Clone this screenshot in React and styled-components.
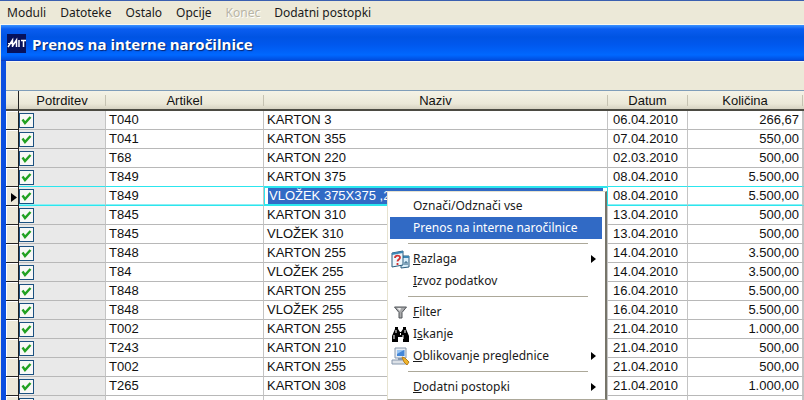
import React from 'react';
import styled, { createGlobalStyle, css } from 'styled-components';

const GlobalStyle = createGlobalStyle`
  * {
    box-sizing: border-box;
  }

  body {
    margin: 0;
    background: #ece9d8;
  }
`;

const uiFont = css`
  font-family: 'Noto Sans', Tahoma, sans-serif;
  font-size: 12px;
`;

const gridFont = css`
  font-family: 'Liberation Sans', Arial, sans-serif;
  font-size: 13px;
`;

const Page = styled.div`
  display: flex;
  flex-direction: column;
  height: 100vh;
  overflow: hidden;
  background: #ece9d8;
  ${uiFont}
`;

const MenuBar = styled.nav`
  display: flex;
  flex: none;
  gap: 14px;
  padding: 0 7px;
  border-top: 1px solid #3a5fb0;
  border-bottom: 1px solid #f8f7f0;
`;

const MenuBarButton = styled.button`
  padding: 0;
  border: 0;
  background: none;
  color: #1a1a1a;
  font: inherit;
  line-height: 23px;

  &:disabled {
    color: #b8b5a6;
    text-shadow: 1px 1px 0 #ffffff;
  }
`;

const Window = styled.section`
  display: flex;
  flex: 1;
  flex-direction: column;
  min-height: 0;
  margin-left: 1px;
`;

const TitleBar = styled.header`
  display: flex;
  flex: none;
  align-items: center;
  gap: 6px;
  height: 36px;
  padding: 2px 6px 0;
  border-bottom: 1px solid #0a3fc4;
  background: linear-gradient(#3a93ff 0, #0a5df0 4px, #0054e3 12px, #0058ee 20px, #0068ff 30px, #0048d8 36px);
`;

const Title = styled.h1`
  margin: 0;
  color: #ffffff;
  font-family: 'Open Sans', sans-serif;
  font-size: 15px;
  font-weight: 700;
  text-shadow: 1px 1px 1px #0a246a;
`;

const WindowBody = styled.div`
  flex: 1;
  min-height: 0;
  border-left: 5px solid #0b4fe0;
`;

const Toolbar = styled.div`
  height: 29px;
  border-top: 1px solid #f8f7f0;
`;

const GridArea = styled.div`
  position: relative;
  border-top: 1px solid #7f9db9;
`;

const Table = styled.table`
  width: 100%;
  border-collapse: separate;
  border-spacing: 0;
  table-layout: fixed;
  ${gridFont}
`;

const Col = styled.col`
  width: ${({ $width }) => ($width ? `${$width}px` : 'auto')};
`;

const Th = styled.th`
  height: 20px;
  padding: 1px 0 0;
  border-bottom: 2px solid #4b4a42;
  background: linear-gradient(#f4f2e6, #ebe8d8 70%, #d6d2c2);
  color: #111111;
  font-weight: 400;
  line-height: 17px;
  text-align: center;
`;

const HeaderLabel = styled.div`
  height: 11px;
  border-right: 1px solid #c5c2b2;
  line-height: 11px;
`;

const CornerTh = styled(Th)`
  border-right: 1px solid #222222;
`;

const Td = styled.td`
  height: 19px;
  padding: 0 3px;
  overflow: hidden;
  border-right: 1px solid #c4c4c4;
  border-bottom: 1px solid ${({ $outlined }) => ($outlined ? '#2ce6ee' : '#b8b8b8')};
  background: #ffffff;
  box-shadow: ${({ $active }) => ($active ? 'inset 0 -1px 0 #8ceff4' : 'none')};
  color: #111111;
  line-height: 18px;
  text-align: ${({ $align }) => $align || 'left'};
  white-space: nowrap;
`;

const MarkerCell = styled(Td)`
  padding: 0 0 0 5px;
  border-right-color: #222222;
  border-bottom-color: #222222;
  background: #ece9d8;
  box-shadow: inset 1px 1px 0 #ffffff;
`;

const CheckCell = styled(Td)`
  padding: 0;
  background: #e9e9e9;
`;

const DateCell = styled(Td)`
  padding: 0 5px;
`;

const EditCell = styled(Td)`
  padding: 1px 4px 1px 3px;
  border: 1px solid #2ce6ee;
  border-top: 0;
  box-shadow: inset 0 1px 0 #2ce6ee, inset 0 -1px 0 #2ce6ee;
`;

const CellInput = styled.input`
  display: block;
  width: 100%;
  height: 16px;
  padding: 0 1px;
  border: 0;
  outline: 0;
  background: #316ac5;
  color: #ffffff;
  font: inherit;
  line-height: 16px;
`;

const CheckLabel = styled.label`
  display: grid;
  width: 15px;
  height: 16px;
  align-items: center;
  justify-items: center;

  > * {
    grid-area: 1 / 1;
  }
`;

const CheckInput = styled.input`
  width: 15px;
  height: 15px;
  margin: 0;
  appearance: none;
  border: 1px solid #1c5180;
  background: #f8f8f6;

  &:not(:checked) + svg {
    visibility: hidden;
  }
`;

const Popup = styled.div`
  position: absolute;
  top: 100px;
  left: 381px;
  width: 220px;
  padding: 3px 3px 1px 2px;
  border: 1px solid #e6e2d0;
  border-right: 2px solid #77756a;
  border-bottom-color: #aca899;
  background: #ffffff;
`;

const PopupItem = styled.button`
  display: grid;
  grid-template-columns: 20px 1fr 8px;
  gap: 3px;
  align-items: center;
  width: 100%;
  height: 22px;
  padding: 0 3px 0 0;
  border: 0;
  background: ${({ $active }) => ($active ? '#316ac5' : 'transparent')};
  color: ${({ $active }) => ($active ? '#ffffff' : '#1a1a1a')};
  ${uiFont}
  line-height: 16px;
  text-align: left;
`;

const IconSlot = styled.span`
  display: flex;
  justify-content: center;
`;

const Separator = styled.hr`
  height: 1px;
  margin: 4px 14px 4px 18px;
  border: 0;
  background: #aca899;
`;

const MitLogo = () => (
  <svg width="19" height="19" viewBox="0 0 19 19" aria-hidden="true">
    <rect width="19" height="19" fill="#07125c" />
    <path
      d="M1 13 5.5 6v7M5.5 12 9.5 6v7M12 6v7M14 6.5h5M16.5 6.5V13"
      fill="none"
      stroke="#ffffff"
      strokeWidth="1.5"
    />
    <path d="M1 9.5h5" stroke="#ffffff" />
  </svg>
);

const CheckMark = () => (
  <svg width="11" height="11" viewBox="0 0 11 11" aria-hidden="true">
    <path d="M1.5 4.5 4 8 9.5 2" fill="none" stroke="#21a121" strokeWidth="2.4" />
  </svg>
);

const RowPointer = () => (
  <svg width="6" height="12" viewBox="0 0 6 12" display="block" aria-hidden="true">
    <path d="M0 3v9l6-4.5z" fill="#000000" />
  </svg>
);

const SubmenuArrow = () => (
  <svg width="5" height="8" viewBox="0 0 5 8" aria-hidden="true">
    <path d="M0 0v8l5-4z" fill="#000000" />
  </svg>
);

const HelpIcon = () => (
  <svg width="19" height="19" viewBox="0 0 19 19" aria-hidden="true">
    <path d="M10 6h8v11l-8 1z" fill="#d9eefa" stroke="#285b7c" />
    <path d="M10 6h8v2h-8z" fill="#3c86b4" />
    <path d="m1 3 11-2v14L1 17z" fill="#eef7fc" stroke="#285b7c" />
    <path d="m1 3 11-2v2L1 5z" fill="#3c86b4" />
    <path
      d="M4 8c0-3 5-3 5-.5 0 2-2.5 2-2.5 4M6.5 13v2"
      fill="none"
      stroke="#d23432"
      strokeWidth="1.8"
    />
    <path d="M14 15v-3h2v3" fill="none" stroke="#285b7c" />
  </svg>
);

const FilterIcon = () => (
  <svg width="13" height="13" viewBox="0 0 13 13" aria-hidden="true">
    <path d="M.5 1h12L8 6.5V12H5V6.5z" fill="#a9aaac" stroke="#505458" />
    <path d="M3 2h4L6 5z" fill="#eeeeee" />
  </svg>
);

const BinocularsIcon = () => (
  <svg width="19" height="16" viewBox="0 0 19 16" aria-hidden="true">
    <path d="M4 1h3v2l2 3h1l2-3V1h3v2l3 7v6h-6v-5H7v5H1v-6l3-7z" fill="#000000" />
    <path d="M5 4v3M3 9v4M14 4v3M12 9v4M9.5 7v2" stroke="#ffffff" />
  </svg>
);

const DesignIcon = () => (
  <svg width="19" height="19" viewBox="0 0 19 19" aria-hidden="true">
    <path d="M4 1h11v10H4z" fill="#e8edf3" stroke="#8798ad" />
    <path d="M6 3h7.5v6H6z" fill="#4386d8" />
    <path d="M6 3h7L6 7z" fill="#99c5f2" />
    <path d="M7 11h5v2H7z" fill="#8798ad" />
    <path d="M1 13h13l2 4H1z" fill="#dce1e7" stroke="#8798ad" />
    <path d="m11 10 3 1 4 4-2 3-3-3z" fill="#efb52d" stroke="#b97e1a" />
  </svg>
);

const menuItems = [
  { label: 'Moduli' },
  { label: 'Datoteke' },
  { label: 'Ostalo' },
  { label: 'Opcije' },
  { label: 'Konec', disabled: true },
  { label: 'Dodatni postopki' },
];

const rows = [
  { artikel: 'T040', naziv: 'KARTON 3', datum: '06.04.2010', kolicina: '266,67' },
  { artikel: 'T041', naziv: 'KARTON 355', datum: '07.04.2010', kolicina: '550,00' },
  { artikel: 'T68', naziv: 'KARTON 220', datum: '02.03.2010', kolicina: '500,00' },
  { artikel: 'T849', naziv: 'KARTON 375', datum: '08.04.2010', kolicina: '5.500,00' },
  { artikel: 'T849', naziv: 'VLOŽEK 375X375 ,2', datum: '08.04.2010', kolicina: '5.500,00' },
  { artikel: 'T845', naziv: 'KARTON 310', datum: '13.04.2010', kolicina: '500,00' },
  { artikel: 'T845', naziv: 'VLOŽEK 310', datum: '13.04.2010', kolicina: '500,00' },
  { artikel: 'T848', naziv: 'KARTON 255', datum: '14.04.2010', kolicina: '3.500,00' },
  { artikel: 'T84', naziv: 'VLOŽEK 255', datum: '14.04.2010', kolicina: '3.500,00' },
  { artikel: 'T848', naziv: 'KARTON 255', datum: '16.04.2010', kolicina: '5.500,00' },
  { artikel: 'T848', naziv: 'VLOŽEK 255', datum: '16.04.2010', kolicina: '5.500,00' },
  { artikel: 'T002', naziv: 'KARTON 255', datum: '21.04.2010', kolicina: '1.000,00' },
  { artikel: 'T243', naziv: 'KARTON 210', datum: '21.04.2010', kolicina: '500,00' },
  { artikel: 'T002', naziv: 'KARTON 255', datum: '21.04.2010', kolicina: '500,00' },
  { artikel: 'T265', naziv: 'KARTON 308', datum: '21.04.2010', kolicina: '1.000,00' },
  { artikel: 'T1252188 1', naziv: 'KARTON 387X287X', datum: '22.04.2010', kolicina: '1.000,00' },
];

const activeRow = 4;

const popupItems = [
  { label: 'Označi/Odznači vse' },
  { label: 'Prenos na interne naročilnice', active: true },
  { separator: true },
  { label: 'Razlaga', hotkey: 0, icon: HelpIcon, submenu: true },
  { label: 'Izvoz podatkov', hotkey: 0 },
  { separator: true },
  { label: 'Filter', hotkey: 0, icon: FilterIcon },
  { label: 'Iskanje', hotkey: 1, icon: BinocularsIcon },
  { label: 'Oblikovanje preglednice', hotkey: 0, icon: DesignIcon, submenu: true },
  { separator: true },
  { label: 'Dodatni postopki', hotkey: 0, submenu: true },
];

const HotkeyLabel = ({ label, hotkey }) => {
  if (hotkey === undefined) {
    return <span>{label}</span>;
  }

  return (
    <span>
      {label.slice(0, hotkey)}
      <u>{label[hotkey]}</u>
      {label.slice(hotkey + 1)}
    </span>
  );
};

const ContextMenu = () => (
  <Popup role="menu">
    {popupItems.map((item, index) => {
      if (item.separator) {
        return <Separator key={index} />;
      }

      const Icon = item.icon;

      return (
        <PopupItem key={index} type="button" role="menuitem" $active={item.active}>
          <IconSlot>{Icon && <Icon />}</IconSlot>
          <HotkeyLabel label={item.label} hotkey={item.hotkey} />
          {item.submenu && <SubmenuArrow />}
        </PopupItem>
      );
    })}
  </Popup>
);

const OrderRow = ({ row, active, outlined }) => (
  <tr>
    <MarkerCell>{active && <RowPointer />}</MarkerCell>
    <CheckCell $active={active} $outlined={outlined}>
      <CheckLabel>
        <CheckInput type="checkbox" defaultChecked aria-label={`Potrditev ${row.artikel}`} />
        <CheckMark />
      </CheckLabel>
    </CheckCell>
    <Td $active={active} $outlined={outlined}>
      {row.artikel}
    </Td>
    {active ? (
      <EditCell>
        <CellInput defaultValue={row.naziv} aria-label="Naziv" />
      </EditCell>
    ) : (
      <Td $outlined={outlined}>{row.naziv}</Td>
    )}
    <DateCell $active={active} $outlined={outlined}>
      {row.datum}
    </DateCell>
    <Td $active={active} $outlined={outlined} $align="right">
      {row.kolicina}
    </Td>
    <Td $active={active} $outlined={outlined} />
  </tr>
);

const OrderTable = () => (
  <Table>
    <colgroup>
      <Col $width={13} />
      <Col $width={87} />
      <Col $width={158} />
      <Col />
      <Col $width={80} />
      <Col $width={115} />
      <Col $width={1} />
    </colgroup>
    <thead>
      <tr>
        <CornerTh />
        {['Potrditev', 'Artikel', 'Naziv', 'Datum', 'Količina'].map((label) => (
          <Th key={label} scope="col">
            <HeaderLabel>{label}</HeaderLabel>
          </Th>
        ))}
        <Th />
      </tr>
    </thead>
    <tbody>
      {/* the row above the active one carries the upper edge of its outline */}
      {rows.map((row, index) => (
        <OrderRow
          key={index}
          row={row}
          active={index === activeRow}
          outlined={index === activeRow || index === activeRow - 1}
        />
      ))}
    </tbody>
  </Table>
);

const App = () => (
  <Page>
    <GlobalStyle />
    <MenuBar>
      {menuItems.map((item) => (
        <MenuBarButton key={item.label} type="button" disabled={item.disabled}>
          {item.label}
        </MenuBarButton>
      ))}
    </MenuBar>
    <Window>
      <TitleBar>
        <MitLogo />
        <Title>Prenos na interne naročilnice</Title>
      </TitleBar>
      <WindowBody>
        <Toolbar />
        <GridArea>
          <OrderTable />
          <ContextMenu />
        </GridArea>
      </WindowBody>
    </Window>
  </Page>
);

export default App;
